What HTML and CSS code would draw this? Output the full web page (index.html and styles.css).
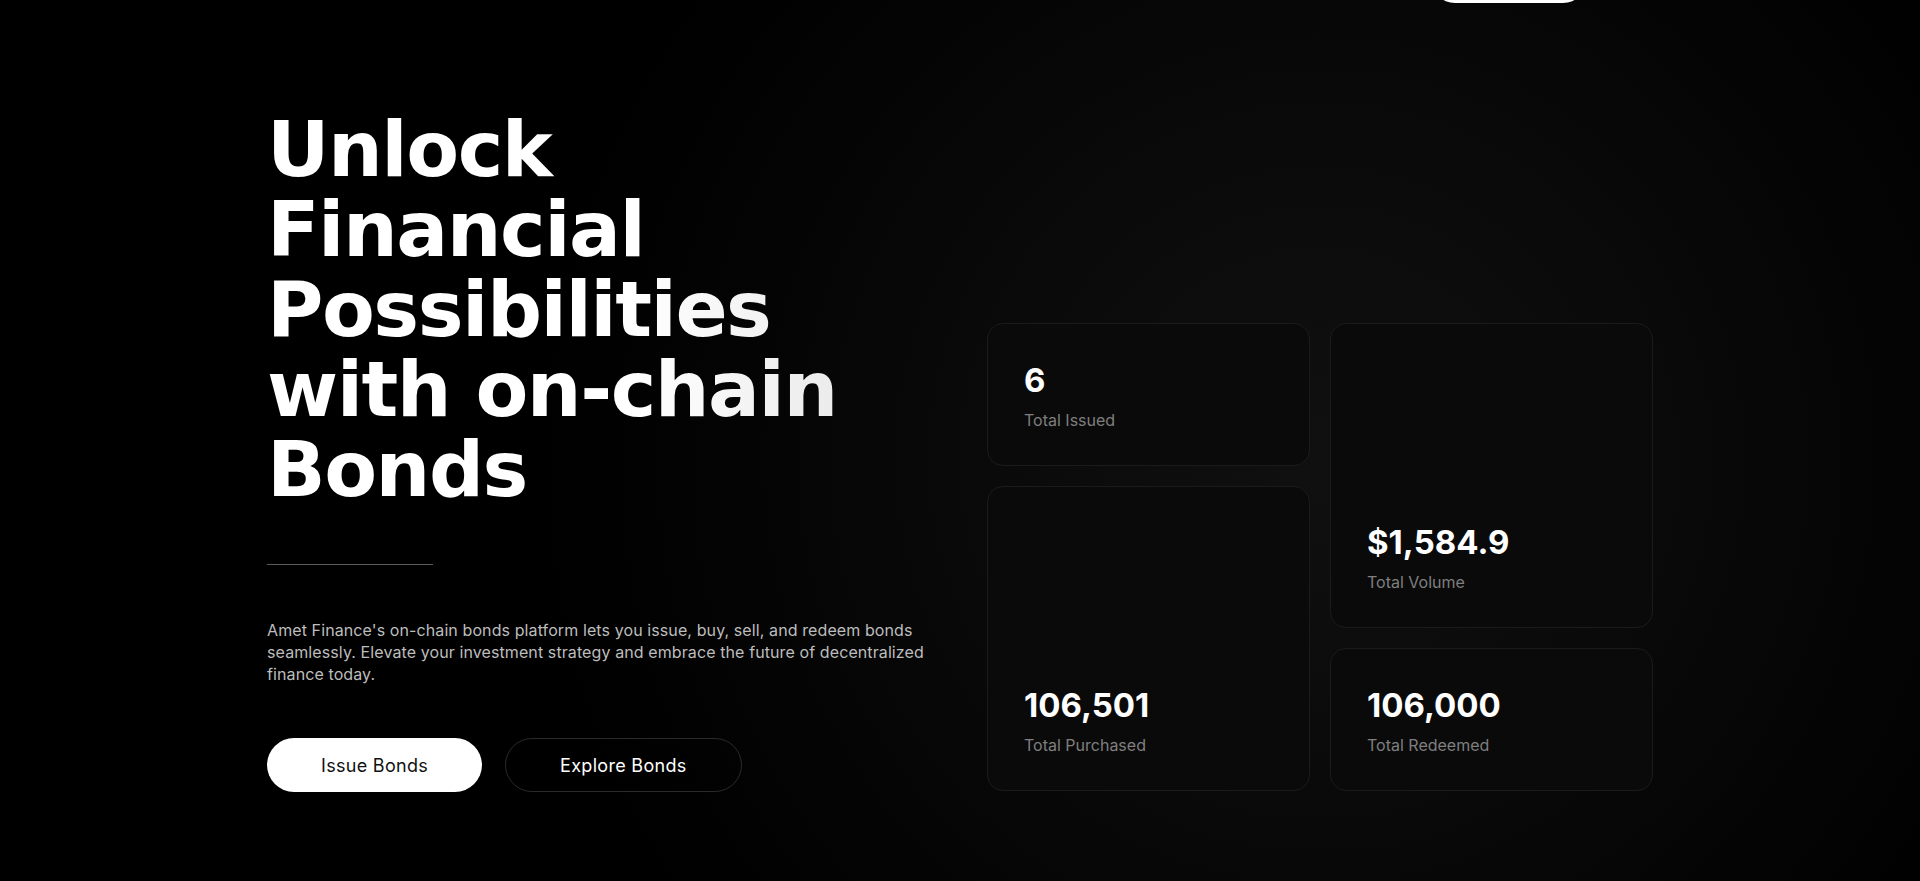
FILE: index.html
```html
<!DOCTYPE html>
<html lang="en">
<head>
    <meta charset="UTF-8">
    <meta name="viewport" content="width=device-width, initial-scale=1.0">
    <title>Amet Finance - On-chain Bonds</title>
    <link rel="stylesheet" href="styles.css">
</head>
<body>
    <header class="header">
        <a href="#" class="header-btn" aria-label="Launch App"></a>
    </header>

    <section class="hero">
        <div class="hero-left">
            <h1 class="hero-title">Unlock Financial Possibilities with on-chain Bonds</h1>
            <div class="divider"></div>
            <p class="hero-text">Amet Finance's on-chain bonds platform lets you issue, buy, sell, and redeem bonds seamlessly. Elevate your investment strategy and embrace the future of decentralized finance today.</p>
            <div class="actions">
                <a href="#" class="btn btn-light">Issue Bonds</a>
                <a href="#" class="btn btn-dark">Explore Bonds</a>
            </div>
        </div>

        <div class="stats">
            <div class="stat stat-issued">
                <span class="stat-value">6</span>
                <span class="stat-label">Total Issued</span>
            </div>
            <div class="stat stat-volume">
                <span class="stat-value">$1,584.9</span>
                <span class="stat-label">Total Volume</span>
            </div>
            <div class="stat stat-purchased">
                <span class="stat-value">106,501</span>
                <span class="stat-label">Total Purchased</span>
            </div>
            <div class="stat stat-redeemed">
                <span class="stat-value">106,000</span>
                <span class="stat-label">Total Redeemed</span>
            </div>
        </div>
    </section>
</body>
</html>
```

FILE: styles.css
```css
:root {
    --white: #ffffff;
    --muted: #7f7f7f;
    --text: #bdbdbd;
    --card-bg: #0a0a0a;
    --card-border: #1b1b1b;
}

* {
    margin: 0;
    padding: 0;
    box-sizing: border-box;
    font-family: 'Inter', 'Liberation Sans', sans-serif;
}

body {
    min-height: 100vh;
    overflow: hidden;
    color: var(--white);
    background: radial-gradient(circle at 1320px 460px, #101010 0, #0b0b0b 280px, #050505 540px, #000 780px);
}

a {
    text-decoration: none;
}

/* header is scrolled up, only the bottom of its button shows */
.header {
    width: 1386px;
    height: 48px;
    margin: -45px auto 0;
    display: flex;
    justify-content: flex-end;
    padding-right: 66px;
}

.header-btn {
    width: 156px;
    height: 48px;
    border-radius: 24px;
    background: var(--white);
}

.hero {
    width: 1386px;
    margin: 0 auto;
    padding-top: 107px;
    display: grid;
    grid-template-columns: 1fr 1fr;
    column-gap: 54px;
    align-items: end;
}

.hero-title {
    font-family: 'DejaVu Sans', 'Inter', sans-serif;
    font-size: 77px;
    line-height: 80px;
    font-weight: 700;
    letter-spacing: -1.5px;
    background: linear-gradient(90deg, #ffffff 55%, #e2e2e2);
    -webkit-background-clip: text;
    background-clip: text;
    color: transparent;
}

.divider {
    width: 166px;
    height: 1px;
    margin-top: 54px;
    background: #5a5a5a;
}

.hero-text {
    margin-top: 54px;
    font-size: 16px;
    line-height: 22px;
    letter-spacing: 0.1px;
    color: var(--text);
}

.actions {
    display: flex;
    gap: 23px;
    margin-top: 53px;
}

.btn {
    height: 54px;
    padding: 0 54px;
    border-radius: 27px;
    font-size: 18px;
    letter-spacing: 0.3px;
    display: flex;
    align-items: center;
}

.btn-light {
    background: var(--white);
    color: #111;
}

.btn-dark {
    border: 1px solid #2a2a2a;
    color: var(--white);
}

.stats {
    height: 468px;
    display: grid;
    grid-template-columns: 1fr 1fr;
    grid-template-rows: repeat(3, 1fr);
    gap: 20px;
    margin-bottom: 1px;
}

.stat {
    display: flex;
    flex-direction: column;
    justify-content: flex-end;
    padding: 0 36px 34px;
    background: var(--card-bg);
    border: 1px solid var(--card-border);
    border-radius: 16px;
}

.stat-issued {
    grid-column: 1;
    grid-row: 1;
}

.stat-volume {
    grid-column: 2;
    grid-row: 1 / 3;
}

.stat-purchased {
    grid-column: 1;
    grid-row: 2 / 4;
}

.stat-redeemed {
    grid-column: 2;
    grid-row: 3;
}

.stat-value {
    font-size: 33px;
    line-height: 40px;
    font-weight: 700;
    color: var(--white);
}

.stat-label {
    margin-top: 9px;
    font-size: 16px;
    line-height: 22px;
    color: var(--muted);
}
```
